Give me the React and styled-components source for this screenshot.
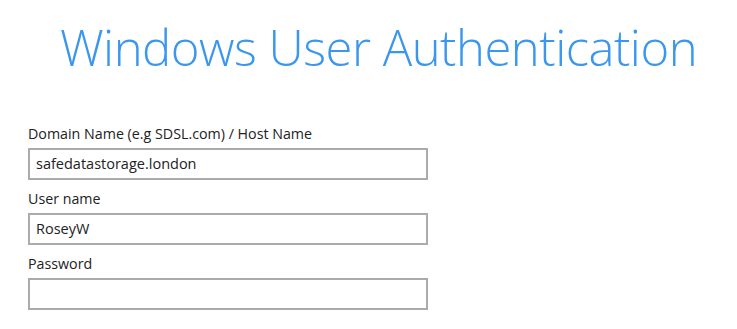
import React from "react";
import styled, {createGlobalStyle} from "styled-components";

const GlobalStyle = createGlobalStyle`
body {
  margin: 0;
  background: #ffffff;
  font-family: "Open Sans", "Noto Sans", sans-serif;
}
`;

const Page = styled.div`
width: 737px;
height: 329px;
overflow: hidden;
background: #ffffff;
`;

const Title = styled.h1`
margin: 14px 0 0 0;
padding-left: 20px;
text-align: center;
font-family: "Open Sans", sans-serif;
font-weight: 300;
font-size: 49px;
letter-spacing: -0.5px;
line-height: 67px;
color: #3b97ee;
`;

const Form = styled.div`
display: flex;
flex-direction: column;
gap: 9px;
padding: 43px 0 0 28px;
`;

const Field = styled.div`
display: flex;
flex-direction: column;
gap: 5px;
`;

const Label = styled.label`
font-size: 14.25px;
line-height: 19px;
color: #222222;
`;

const Input = styled.div`
box-sizing: border-box;
width: 400px;
height: 32px;
border: 2px solid #ababab;
padding: 0 6px;
font-size: 14.5px;
line-height: 28px;
color: #222222;
`;

const fields = [
    {label: "Domain Name (e.g SDSL.com) / Host Name", value: "safedatastorage.london"},
    {label: "User name", value: "RoseyW"},
    {label: "Password", value: ""},
];

export default function App(){
    return(
        <Page>
            <GlobalStyle/>
            <Title>Windows User Authentication</Title>
            <Form>
                {fields.map(f=>(
                    <Field key={f.label}>
                        <Label>{f.label}</Label>
                        <Input>{f.value}</Input>
                    </Field>
                ))}
            </Form>
        </Page>
    )
}
